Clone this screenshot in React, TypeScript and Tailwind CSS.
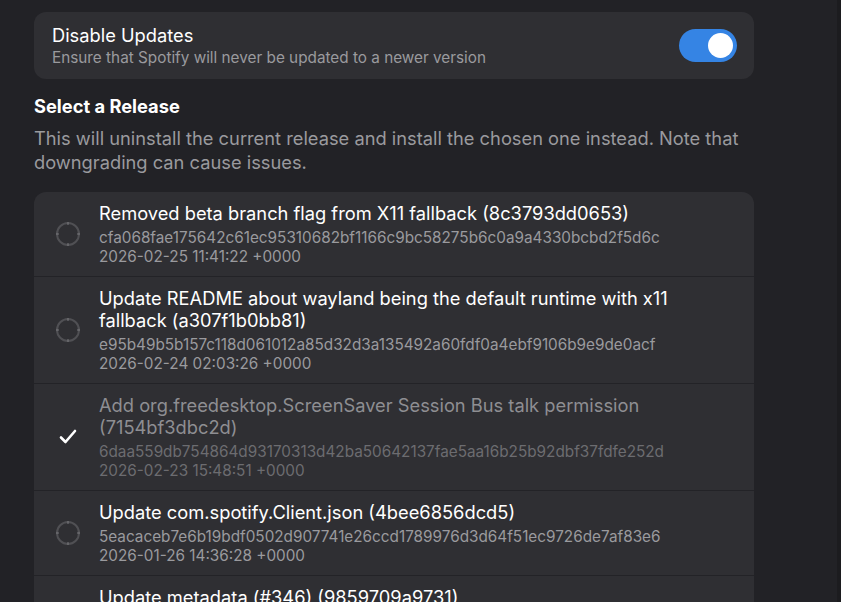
import React from "react";

type Release = {
  title: string;
  hash: string;
  date: string;
  current?: boolean;
};

const releases: Release[] = [
  {
    title: "Removed beta branch flag from X11 fallback (8c3793dd0653)",
    hash: "cfa068fae175642c61ec95310682bf1166c9bc58275b6c0a9a4330bcbd2f5d6c",
    date: "2026-02-25 11:41:22 +0000",
  },
  {
    title: "Update README about wayland being the default runtime with x11 fallback (a307f1b0bb81)",
    hash: "e95b49b5b157c118d061012a85d32d3a135492a60fdf0a4ebf9106b9e9de0acf",
    date: "2026-02-24 02:03:26 +0000",
  },
  {
    title: "Add org.freedesktop.ScreenSaver Session Bus talk permission (7154bf3dbc2d)",
    hash: "6daa559db754864d93170313d42ba50642137fae5aa16b25b92dbf37fdfe252d",
    date: "2026-02-23 15:48:51 +0000",
    current: true,
  },
  {
    title: "Update com.spotify.Client.json (4bee6856dcd5)",
    hash: "5eacaceb7e6b19bdf0502d907741e26ccd1789976d3d64f51ec9726de7af83e6",
    date: "2026-01-26 14:36:28 +0000",
  },
  {
    title: "Update metadata (#346) (9859709a9731)",
    hash: "0b1c7e43a6f2d9e58c4a1b7f20d3e96c5a84f17b2e6d09c3a5f81e47b2c6d90a",
    date: "2026-01-20 09:12:44 +0000",
  },
];

function Radio() {
  return (
    <svg width="24" height="24" viewBox="0 0 24 24" className="shrink-0">
      <circle cx="12" cy="12" r="11" fill="none" stroke="#505054" strokeWidth="2" />
      <g stroke="#7a7a7f" strokeWidth="1">
        <line x1="12" y1="0" x2="12" y2="3" />
        <line x1="12" y1="21" x2="12" y2="24" />
        <line x1="0" y1="12" x2="3" y2="12" />
        <line x1="21" y1="12" x2="24" y2="12" />
      </g>
    </svg>
  );
}

function Check() {
  return (
    <svg width="24" height="24" viewBox="0 0 24 24" className="shrink-0">
      <polyline
        points="5,12.5 9.5,17 19,6"
        fill="none"
        stroke="#ffffff"
        strokeWidth="2.6"
        strokeLinecap="round"
        strokeLinejoin="round"
      />
    </svg>
  );
}

export default function App() {
  return (
    <div className="h-screen w-full overflow-hidden bg-[#222226] flex font-['Inter',sans-serif]">
      <div className="flex-1 pt-[12px] pl-[34px]">
        <div className="w-[720px]">
          {/* Disable updates row */}
          <div className="h-[67px] rounded-[12px] bg-[#2f2f33] flex items-center justify-between pl-[18px] pr-[17px]">
            <div className="flex flex-col gap-[3px]">
              <div className="text-[18.3px] leading-[22px] text-white">Disable Updates</div>
              <div className="text-[15.3px] leading-[18px] text-[#9a9a9e]">
                Ensure that Spotify will never be updated to a newer version
              </div>
            </div>
            <div className="w-[58px] h-[33px] rounded-full bg-[#3584e4] flex items-center justify-end pr-[4px]">
              <div className="w-[25px] h-[25px] rounded-full bg-white" />
            </div>
          </div>

          <h2 className="mt-[16px] text-[18.3px] leading-[22px] font-bold text-white">Select a Release</h2>
          <p className="mt-[9px] text-[18.3px] leading-[24px] text-[#9a9a9e]">
            This will uninstall the current release and install the chosen one instead. Note that downgrading can cause issues.
          </p>

          {/* Releases list */}
          <div className="mt-[18px] rounded-[12px] bg-[#2f2f33] overflow-hidden">
            {releases.map((r, i) => (
              <div
                key={r.hash}
                className={`flex items-center pl-[22px] pr-[20px] py-[10px] ${i > 0 ? "border-t border-[#232327]" : ""}`}
              >
                {r.current ? <Check /> : <Radio />}
                <div className="ml-[19px] flex flex-col min-w-0">
                  <div className={`text-[18.3px] leading-[22px] ${r.current ? "text-[#8e8e92]" : "text-white"}`}>
                    {r.title}
                  </div>
                  <div className={`mt-[5px] text-[15.3px] leading-[18.5px] ${r.current ? "text-[#6c6c70]" : "text-[#9a9a9e]"}`}>
                    <div>{r.hash}</div>
                    <div>{r.date}</div>
                  </div>
                </div>
              </div>
            ))}
          </div>
        </div>
      </div>
      <div className="w-[4px] bg-[#1c1c1f]" />
    </div>
  );
}
